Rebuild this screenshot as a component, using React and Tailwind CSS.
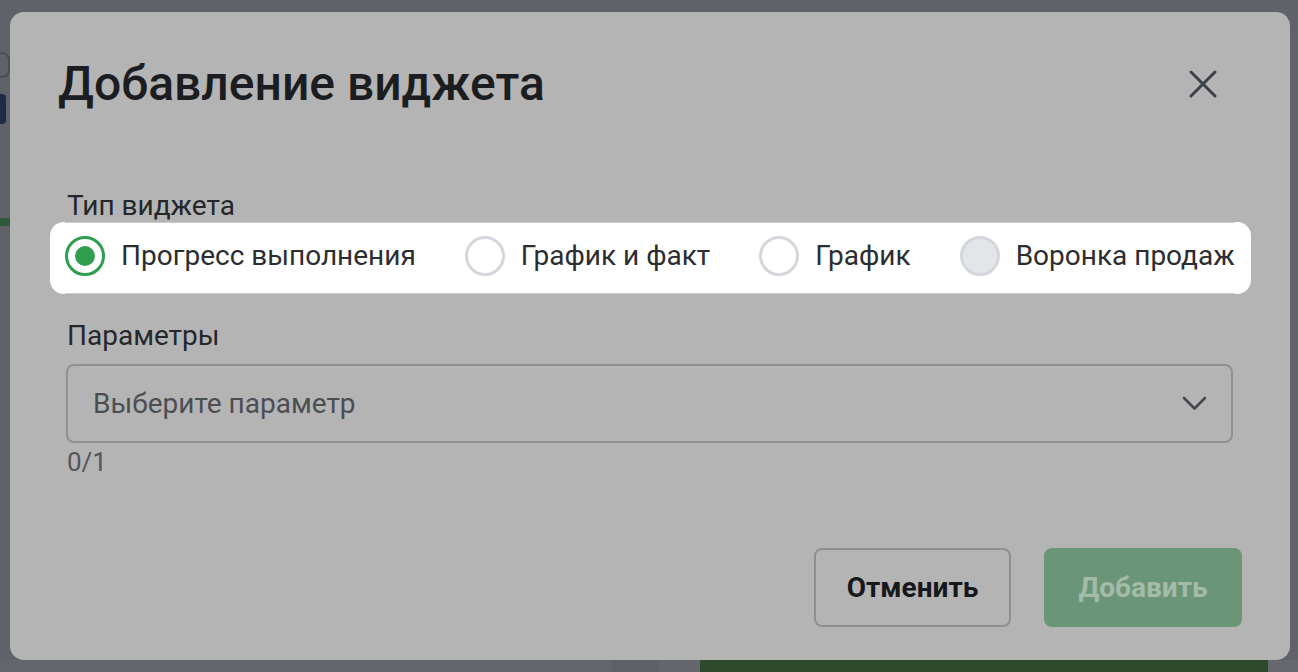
import React, { useState } from "react";

const OPTIONS = [
  { id: "progress", label: "Прогресс выполнения" },
  { id: "planfact", label: "График и факт" },
  { id: "plan", label: "График" },
  { id: "funnel", label: "Воронка продаж", disabled: true },
];

function Radio({ checked, disabled }) {
  if (checked) {
    return (
      <span className="flex items-center justify-center w-[40px] h-[40px] rounded-full border-[3px] border-[#2f9e4f] bg-white shrink-0">
        <span className="w-[20px] h-[20px] rounded-full bg-[#2f9e4f]" />
      </span>
    );
  }
  return (
    <span
      className={
        "w-[40px] h-[40px] rounded-full border-[3px] border-[#d3d7dc] shrink-0 " +
        (disabled ? "bg-[#e3e5e8]" : "bg-white")
      }
    />
  );
}

export default function App() {
  const [type, setType] = useState("progress");

  return (
    <div className="w-[1298px] h-[672px] overflow-hidden bg-[#5f6269] flex flex-col font-['Roboto',sans-serif]">
      <div className="flex h-[660px]">
        {/* page behind the overlay, left edge */}
        <div className="w-[10px] flex flex-col pt-[52px]">
          <div className="w-[16px] h-[26px] -ml-[6px] rounded-full border-2 border-[#4a4d54]" />
          <div className="w-[6px] h-[30px] mt-[16px] rounded-r bg-[#1f2a44]" />
          <div className="w-[10px] h-[8px] mt-[94px] bg-[#2d5a3a]" />
        </div>

        {/* modal */}
        <div className="w-[1280px] h-[648px] mt-[12px] rounded-[14px] bg-[#b4b4b4] flex flex-col">
          <div className="flex items-center justify-between pl-[48px] pr-[73px] pt-[44px]">
            <h2 className="text-[48px] leading-[56px] font-medium text-[#1c1d20]">
              Добавление виджета
            </h2>
            <svg width="28" height="28" viewBox="0 0 28 28" className="-mt-[1px]">
              <path d="M2 2 L26 26 M26 2 L2 26" stroke="#3c4047" strokeWidth="3" strokeLinecap="round" />
            </svg>
          </div>

          <div className="flex flex-col pl-[57px] pr-[57px] mt-[78px]">
            <div className="text-[28px] leading-[32px] text-[#25272b]">Тип виджета</div>

            <div className="self-start w-max shrink-0 -ml-[17px] bg-white rounded-[14px] pl-[22px] pr-[16px]">
              <div className="h-[72px] pb-[5px] border-y border-[#cdcdcd] flex items-center gap-[49px] -ml-[7px]">
                {OPTIONS.map((o) => (
                  <button
                    key={o.id}
                    type="button"
                    disabled={o.disabled}
                    onClick={() => setType(o.id)}
                    className="flex items-center gap-[16px] whitespace-nowrap"
                  >
                    <Radio checked={type === o.id} disabled={o.disabled} />
                    <span className="text-[28px] leading-[32px] text-[#2b2d31]">{o.label}</span>
                  </button>
                ))}
              </div>
            </div>

            <div className="text-[28px] leading-[32px] text-[#25272b] mt-[26px]">Параметры</div>

            <div className="mt-[12px] -ml-[1px] h-[79px] rounded-[8px] border-2 border-[#8f9092] flex items-center justify-between pl-[25px] pr-[24px]">
              <span className="text-[28px] text-[#4b4e53]">Выберите параметр</span>
              <svg width="25" height="15" viewBox="0 0 25 15">
                <path d="M2 2 L12.5 12.5 L23 2" fill="none" stroke="#45484e" strokeWidth="2.6" strokeLinecap="round" strokeLinejoin="round" />
              </svg>
            </div>
            <div className="text-[26px] leading-[30px] text-[#53565b] mt-[4px]">0/1</div>
          </div>

          <div className="mt-auto mb-[33px] flex justify-end gap-[33px] pr-[48px]">
            <button
              type="button"
              className="w-[197px] h-[79px] rounded-[8px] border-2 border-[#8e8f91] text-[28px] font-bold text-[#17181b]"
            >
              Отменить
            </button>
            <button
              type="button"
              disabled
              className="w-[198px] h-[79px] rounded-[8px] bg-[#6b9577] text-[28px] font-bold text-[#a4bba9]"
            >
              Добавить
            </button>
          </div>
        </div>

        <div className="flex-1" />
      </div>

      {/* page behind the overlay, bottom edge */}
      <div className="flex h-[12px]">
        <div className="w-[612px] bg-[#62656b]" />
        <div className="w-[47px] bg-[#5d6066]" />
        <div className="w-[41px] bg-[#63666c]" />
        <div className="w-[568px] bg-[#2d4a2b]" />
        <div className="flex-1 bg-[#66686e]" />
      </div>
    </div>
  );
}
